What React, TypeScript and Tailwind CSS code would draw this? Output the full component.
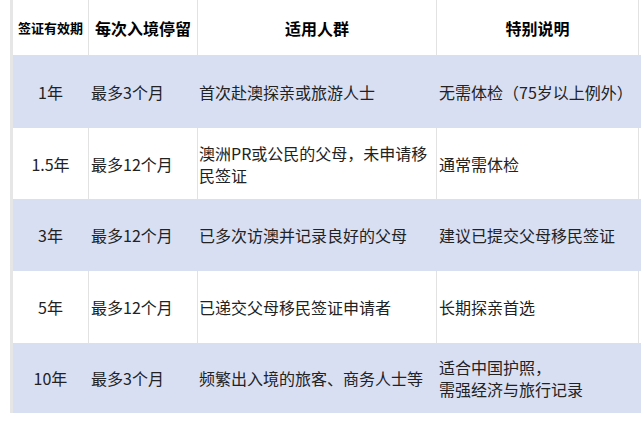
import React from 'react';

type Row = {
  period: string;
  stay: string;
  who: React.ReactNode;
  note: React.ReactNode;
  shaded: boolean;
  h: string;
};

const rows: Row[] = [
  { period: '1年', stay: '最多3个月', who: '首次赴澳探亲或旅游人士', note: '无需体检（75岁以上例外）', shaded: true, h: 'h-[73px]' },
  { period: '1.5年', stay: '最多12个月', who: '澳洲PR或公民的父母，未申请移民签证', note: '通常需体检', shaded: false, h: 'h-[71px]' },
  { period: '3年', stay: '最多12个月', who: '已多次访澳并记录良好的父母', note: '建议已提交父母移民签证', shaded: true, h: 'h-[72px]' },
  { period: '5年', stay: '最多12个月', who: '已递交父母移民签证申请者', note: '长期探亲首选', shaded: false, h: 'h-[72px]' },
  {
    period: '10年',
    stay: '最多3个月',
    who: '频繁出入境的旅客、商务人士等',
    note: (
      <>
        适合中国护照，
        <br />
        需强经济与旅行记录
      </>
    ),
    shaded: true,
    h: 'h-[70px]',
  },
];

export default function App() {
  return (
    <div
      className="w-[641px] h-[421px] bg-white overflow-hidden flex"
      style={{ fontFamily: '"Noto Sans CJK SC", "Noto Sans", sans-serif' }}
    >
      {/* left gutter strip */}
      <div className="w-[10px] shrink-0" />
      <div className="w-[3px] h-[413px] shrink-0 bg-[#e6e6e6]" />

      <div className="flex-1 flex flex-col">
        {/* header */}
        <div className="flex h-[55px] bg-white text-black font-bold">
          <div className="w-[76px] shrink-0 border-r border-[#e2e2e2] flex items-center justify-center text-[13px]">
            签证有效期
          </div>
          <div className="w-[109px] shrink-0 border-r border-[#e2e2e2] flex items-center justify-center text-[16px]">
            每次入境停留
          </div>
          <div className="w-[239px] shrink-0 border-r border-[#e2e2e2] flex items-center justify-center text-[16px]">
            适用人群
          </div>
          <div className="w-[202px] shrink-0 border-r border-[#e2e2e2] flex items-center justify-center text-[16px]">
            特别说明
          </div>
        </div>

        {rows.map((r, i) => {
          const line = r.shaded ? 'border-[#d9dff3]' : 'border-[#e2e2e2]';
          return (
            <div
              key={i}
              className={`flex ${r.h} text-[16px] leading-[22px] text-[#222] ${r.shaded ? 'bg-[#d9dff3]' : 'bg-white'}`}
            >
              <div className={`w-[76px] shrink-0 border-r ${line} flex items-center justify-center`}>{r.period}</div>
              <div className={`w-[109px] shrink-0 border-r ${line} flex items-center pl-[2px]`}>{r.stay}</div>
              <div className={`w-[239px] shrink-0 border-r ${line} flex items-center pl-[1px] pr-[2px]`}>
                <div>{r.who}</div>
              </div>
              <div className={`w-[202px] shrink-0 border-r ${line} flex items-center pl-[2px]`}>
                <div>{r.note}</div>
              </div>
            </div>
          );
        })}
      </div>
    </div>
  );
}
